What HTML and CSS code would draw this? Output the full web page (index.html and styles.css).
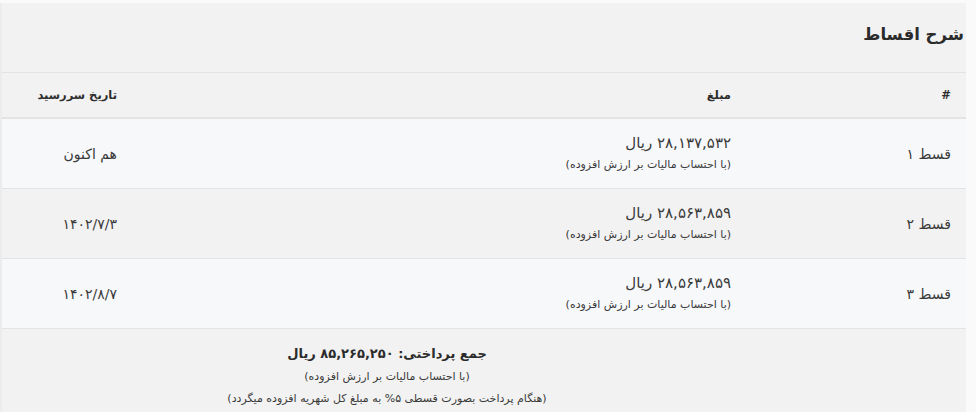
FILE: index.html
```html
<!DOCTYPE html>
<html lang="fa" dir="rtl">
<head>
<meta charset="utf-8">
<link rel="stylesheet" href="styles.css">
</head>
<body>
<div class="card">
  <div class="card-head"><h2 class="title">شرح اقساط</h2></div>
  <table class="tbl">
    <colgroup><col class="c-num"><col class="c-amt"><col class="c-date"></colgroup>
    <thead>
      <tr><th>#</th><th>مبلغ</th><th>تاریخ سررسید</th></tr>
    </thead>
    <tbody>
      <tr class="odd">
        <td>قسط ۱</td>
        <td><div class="amt">۲۸,۱۳۷,۵۳۲ ریال</div><div class="sub">(با احتساب مالیات بر ارزش افزوده)</div></td>
        <td>هم اکنون</td>
      </tr>
      <tr class="even">
        <td>قسط ۲</td>
        <td><div class="amt">۲۸,۵۶۳,۸۵۹ ریال</div><div class="sub">(با احتساب مالیات بر ارزش افزوده)</div></td>
        <td>۱۴۰۲/۷/۳</td>
      </tr>
      <tr class="odd">
        <td>قسط ۳</td>
        <td><div class="amt">۲۸,۵۶۳,۸۵۹ ریال</div><div class="sub">(با احتساب مالیات بر ارزش افزوده)</div></td>
        <td>۱۴۰۲/۸/۷</td>
      </tr>
    </tbody>
  </table>
  <div class="foot">
    <div class="total">جمع پرداختی: ۸۵,۲۶۵,۲۵۰ ریال</div>
    <div class="sub">(با احتساب مالیات بر ارزش افزوده)</div>
    <div class="sub">(هنگام پرداخت بصورت قسطی ۵% به مبلغ کل شهریه افزوده میگردد)</div>
  </div>
</div>
</body>
</html>
```
FILE: styles.css
```css
html, body {
  margin: 0;
  padding: 0;
  background: #fafafa;
}
body {
  font-family: "DejaVu Sans", sans-serif;
  color: #333;
  direction: rtl;
}
.card {
  width: 966px;
  margin: 3px 10px 0 0;
  background: #f2f2f2;
  height: 409px;
  box-sizing: border-box;
  border-left: 2px solid #ececec;
}
.card-head {
  height: 70px;
  border-bottom: 1px solid #e2e2e2;
  display: flex;
  align-items: flex-start;
  padding-top: 20px;
  box-sizing: border-box;
}
.title {
  margin: 0;
  font-size: 16.5px;
  line-height: 24px;
  font-weight: bold;
  color: #2b2b2b;
  padding-right: 2px;
}
.tbl {
  width: 100%;
  border-collapse: collapse;
}
.c-num { width: 220px; }
.c-date { width: 130px; }
.tbl th {
  height: 44px;
  text-align: right;
  font-size: 11.5px;
  font-weight: bold;
  padding: 0 15px;
  border-bottom: 2px solid #e2e3e5;
  color: #2e2e2e;
}
.tbl td {
  height: 69px;
  padding: 0 15px;
  text-align: right;
  vertical-align: middle;
  font-size: 14px;
  border-bottom: 1px solid #e2e3e5;
  color: #3a3a3a;
}
.odd td { background: #f7f8fa; }
.even td { background: #f2f2f2; }
.amt {
  font-size: 15px;
  line-height: 22px;
  color: #3a3a3a;
}
.sub {
  font-size: 11px;
  line-height: 22px;
  color: #3a3a3a;
}
.foot {
  padding: 13px 194px 0 0;
  text-align: center;
}
.total {
  font-size: 13px;
  font-weight: bold;
  line-height: 24px;
  color: #2b2b2b;
}
.foot .sub {
  line-height: 22px;
}
```
